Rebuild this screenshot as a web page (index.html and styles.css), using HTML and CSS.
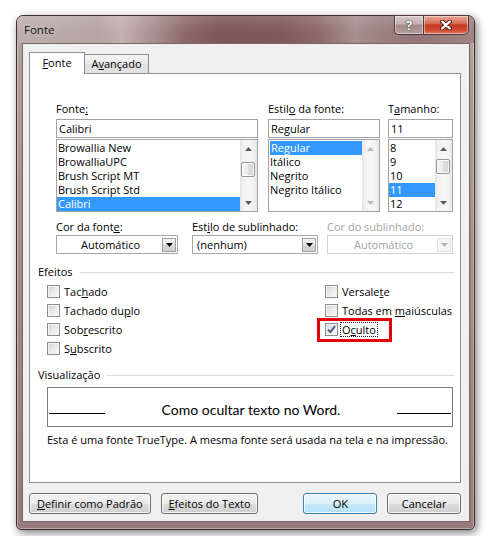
FILE: index.html
```html
<!DOCTYPE html>
<html lang="pt">
<head>
<meta charset="utf-8">
<title>Fonte</title>
<link rel="stylesheet" href="styles.css">
</head>
<body>
<div class="window">
  <div class="titlebar">
    <span class="title">Fonte</span>
    <div class="caption">
      <div class="cbtn help"><span>?</span></div>
      <div class="cbtn close">
        <svg width="12" height="10" viewBox="0 0 12 10"><path d="M2.2 1.6L9.8 8.4M9.8 1.6L2.2 8.4" stroke="#5a1d15" stroke-width="4.2" stroke-linecap="round"/><path d="M2.2 1.6L9.8 8.4M9.8 1.6L2.2 8.4" stroke="#fff" stroke-width="2.3" stroke-linecap="round"/></svg>
      </div>
    </div>
  </div>
  <div class="client">
    <div class="tabs">
      <div class="tab active"><u>F</u>onte</div>
      <div class="tab">A<u>v</u>ançado</div>
    </div>
    <div class="panel">
      <div class="fontrow">
        <div class="col c-font">
          <div class="lbl">Fonte<u>:</u></div>
          <div class="input">Calibri</div>
          <div class="list">
            <div class="items">
              <div class="item">Browallia New</div>
              <div class="item">BrowalliaUPC</div>
              <div class="item">Brush Script MT</div>
              <div class="item">Brush Script Std</div>
              <div class="item sel">Calibri</div>
            </div>
            <div class="sb">
              <div class="arr"><svg width="7" height="4" viewBox="0 0 7 4"><polygon points="0,4 3.5,0 7,4" fill="#5b5b5b"/></svg></div>
              <div class="track"><div class="thumb t1"></div></div>
              <div class="arr"><svg width="7" height="4" viewBox="0 0 7 4"><polygon points="0,0 7,0 3.5,4" fill="#5b5b5b"/></svg></div>
            </div>
          </div>
        </div>
        <div class="col c-style">
          <div class="lbl">Estil<u>o</u> da fonte:</div>
          <div class="input">Regular</div>
          <div class="list">
            <div class="items">
              <div class="item sel inset">Regular</div>
              <div class="item">Itálico</div>
              <div class="item">Negrito</div>
              <div class="item">Negrito Itálico</div>
            </div>
            <div class="sb">
              <div class="arr"><svg width="7" height="4" viewBox="0 0 7 4"><polygon points="0,4 3.5,0 7,4" fill="#b8b8b8"/></svg></div>
              <div class="track"></div>
              <div class="arr"><svg width="7" height="4" viewBox="0 0 7 4"><polygon points="0,0 7,0 3.5,4" fill="#b8b8b8"/></svg></div>
            </div>
          </div>
        </div>
        <div class="col c-size">
          <div class="lbl">T<u>a</u>manho:</div>
          <div class="input">11</div>
          <div class="list">
            <div class="items">
              <div class="item">8</div>
              <div class="item">9</div>
              <div class="item">10</div>
              <div class="item sel">11</div>
              <div class="item">12</div>
            </div>
            <div class="sb">
              <div class="arr"><svg width="7" height="4" viewBox="0 0 7 4"><polygon points="0,4 3.5,0 7,4" fill="#5b5b5b"/></svg></div>
              <div class="track"><div class="thumb t3"></div></div>
              <div class="arr"><svg width="7" height="4" viewBox="0 0 7 4"><polygon points="0,0 7,0 3.5,4" fill="#5b5b5b"/></svg></div>
            </div>
          </div>
        </div>
      </div>

      <div class="comborow">
        <div class="ccol cc1">
          <div class="lbl">Cor da font<u>e</u>:</div>
          <div class="combo">
            <span class="val center">Automático</span>
            <span class="dd"><svg width="7" height="4" viewBox="0 0 7 4"><polygon points="0,0 7,0 3.5,4" fill="#000"/></svg></span>
          </div>
        </div>
        <div class="ccol cc2">
          <div class="lbl">Est<u>i</u>lo de sublinhado:</div>
          <div class="combo">
            <span class="val">(nenhum)</span>
            <span class="dd"><svg width="7" height="4" viewBox="0 0 7 4"><polygon points="0,0 7,0 3.5,4" fill="#000"/></svg></span>
          </div>
        </div>
        <div class="ccol cc3 disabled">
          <div class="lbl">Cor do sublinhado:</div>
          <div class="combo">
            <span class="val center">Automático</span>
            <span class="dd"><svg width="7" height="4" viewBox="0 0 7 4"><polygon points="0,0 7,0 3.5,4" fill="#b5b5b5"/></svg></span>
          </div>
        </div>
      </div>

      <div class="group">
        <span>Efeitos</span><span class="rule"></span>
      </div>
      <div class="effects">
        <div class="ecol left">
          <div class="cb"><span class="box"></span><span>Tac<u>h</u>ado</span></div>
          <div class="cb"><span class="box"></span><span>Tachado du<u>p</u>lo</span></div>
          <div class="cb"><span class="box"></span><span>Sob<u>r</u>escrito</span></div>
          <div class="cb"><span class="box"></span><span>S<u>u</u>bscrito</span></div>
        </div>
        <div class="ecol right">
          <div class="cb"><span class="box"></span><span>Versale<u>t</u>e</span></div>
          <div class="cb"><span class="box"></span><span>Todas em <u>m</u>aiúsculas</span></div>
          <div class="cb oculto">
            <span class="box"><svg width="11" height="11" viewBox="0 0 11 11"><path d="M2 5.6L4.4 8.2L9 2.2" fill="none" stroke="#4b5c8c" stroke-width="1.9" stroke-linejoin="round"/></svg></span>
            <span class="focus">O<u>c</u>ulto</span>
            <span class="redframe"></span>
          </div>
        </div>
      </div>

      <div class="group vis">
        <span>Visualização</span><span class="rule"></span>
      </div>
      <div class="preview">
        <span class="pline l"></span>
        <span class="ptext">Como ocultar texto no Word.</span>
        <span class="pline r"></span>
      </div>
      <div class="note">Esta é uma fonte TrueType. A mesma fonte será usada na tela e na impressão.</div>
    </div>

    <div class="buttons">
      <div class="btn b1"><span><u>D</u>efinir como Padrão</span></div>
      <div class="btn b2"><span><u>E</u>feitos do Texto</span></div>
      <div class="btn ok">OK</div>
      <div class="btn cancel">Cancelar</div>
    </div>
  </div>
</div>
</body>
</html>
```

FILE: styles.css
```css
* { box-sizing: border-box; }
html, body { margin: 0; padding: 0; background: #fff; }
body {
  width: 489px;
  height: 536px;
  overflow: hidden;
  font-family: "Segoe UI", "Open Sans", "DejaVu Sans", sans-serif;
  font-size: 11px;
  color: #000;
}
u { text-decoration: underline; text-underline-offset: 1px; }

.window {
  margin: 15px 0 0 16px;
  width: 459px;
  height: 515px;
  border: 1px solid #3e2f2f;
  border-radius: 7px 7px 5px 5px;
  padding: 0 4px 7px 5px;
  display: flex;
  flex-direction: column;
  background: linear-gradient(180deg, #b4a2a2 0%, #a58b8b 45%, #987a7a 100%);
  box-shadow: 2px 3px 9px rgba(0,0,0,0.5), inset 0 0 0 1px rgba(255,255,255,0.35);
}

.titlebar {
  height: 27px;
  margin: 0 -4px 0 -5px;
  padding: 0 5px 0 7px;
  border-radius: 6px 6px 0 0;
  display: flex;
  justify-content: space-between;
  align-items: flex-start;
  background:
    linear-gradient(180deg, rgba(255,255,255,0.14) 0%, rgba(255,255,255,0) 60%),
    linear-gradient(90deg, #bcaeae 0%, #b6a4a4 18%, #c3b0b0 23%, #a88f8f 30%, #8c6868 37%, #7c5757 44%, #7e5959 58%, #8d6a6a 66%, #a88e8e 74%, #9d8181 79%, #947474 88%, #a08484 100%);
}
.title {
  line-height: 27px;
  font-size: 11.5px;
  color: #111;
  text-shadow: 0 0 6px rgba(255,255,255,0.6);
}
.caption {
  display: flex;
  margin-top: -1px;
}
.cbtn {
  height: 20px;
  border: 1px solid #4d3a3a;
  display: flex;
  align-items: center;
  justify-content: center;
  box-shadow: inset 0 0 0 1px rgba(255,255,255,0.45);
}
.help {
  width: 29px;
  border-right: none;
  border-radius: 0 0 0 5px;
  background: linear-gradient(180deg, #d5c9c9 0%, #c2b0b0 45%, #a68b8b 50%, #b59e9e 100%);
  color: #fff;
  font-weight: bold;
  font-size: 13px;
  text-shadow: 0 0 2px #3b2a2a, 0 0 1px #3b2a2a;
}
.help span { line-height: 16px; }
.close {
  width: 46px;
  border-radius: 0 0 5px 0;
  background: linear-gradient(180deg, #e9a89a 0%, #d8705e 40%, #c43b22 50%, #cf4d33 80%, #e07a60 100%);
}

.client {
  flex: 1;
  background: #f0f0f0;
  border: 1px solid #7a6464;
  padding: 8px 8px 0 6px;
  display: flex;
  flex-direction: column;
}

.tabs {
  display: flex;
  align-items: flex-end;
  height: 22px;
}
.tab {
  height: 20px;
  width: 65px;
  margin-left: -1px;
  border: 1px solid #8e8f8f;
  background: linear-gradient(180deg, #f3f3f3 0%, #ebebeb 50%, #dedede 51%, #e3e3e3 100%);
  display: flex;
  align-items: center;
  justify-content: center;
  padding-bottom: 1px;
}
.tab.active {
  height: 22px;
  width: 56px;
  margin-left: 0;
  background: #fff;
  border-bottom: none;
  position: relative;
  z-index: 1;
  padding-bottom: 3px;
}

.panel {
  margin-top: -1px;
  height: 410px;
  border: 1px solid #8e8f8f;
  background: #fff;
  display: flex;
  flex-direction: column;
}

.lbl { line-height: 15px; height: 15px; white-space: nowrap; }

.fontrow {
  margin-top: 27px;
  padding-left: 26px;
  display: flex;
}
.col { display: flex; flex-direction: column; }
.col .lbl { margin-bottom: 3px; }
.c-font { width: 202px; }
.c-style { width: 112px; margin-left: 10px; }
.c-size { width: 65px; margin-left: 8px; }

.input {
  height: 19px;
  border: 1px solid #a3a3a3;
  line-height: 17px;
  padding-left: 2px;
}
.list {
  margin-top: 1px;
  height: 73px;
  border: 1px solid #a3a3a3;
  display: flex;
}
.items { flex: 1; padding-top: 1px; min-width: 0; }
.item { line-height: 14px; height: 14px; padding-left: 1px; white-space: nowrap; }
.item.sel { background: #3399ff; color: #fff; }
.item.inset { margin-left: 1px; }

.sb {
  width: 17px;
  display: flex;
  flex-direction: column;
  background: linear-gradient(90deg, #e4e4e4 0, #f1f1f1 3px, #f7f7f7 50%, #f1f1f1 calc(100% - 3px), #e6e6e6 100%);
}
.arr { height: 17px; display: flex; align-items: center; justify-content: center; }
.track { flex: 1; }
.thumb {
  width: 14px;
  height: 15px;
  margin-left: 1px;
  border: 1px solid #979797;
  border-radius: 2px;
  background: linear-gradient(90deg, #f4f4f4 0%, #ececec 50%, #dcdcdc 51%, #d6d6d6 100%);
  box-shadow: inset 0 0 0 1px rgba(255,255,255,0.8);
}
.t1 { margin-top: 5px; }
.t3 { margin-top: 2px; }

.comborow {
  margin-top: 7px;
  padding-left: 26px;
  display: flex;
}
.ccol { display: flex; flex-direction: column; }
.ccol .lbl { margin-bottom: 1px; }
.cc1 { width: 122px; }
.cc2 { width: 126px; margin-left: 14px; }
.cc3 { width: 126px; margin-left: 9px; }
.combo {
  height: 19px;
  border: 1px solid #a8a8a8;
  background: #fff;
  display: flex;
  padding: 2px 1px 1px 2px;
}
.val { flex: 1; line-height: 14px; padding-left: 2px; }
.val.center { text-align: center; padding-left: 0; }
.dd {
  width: 14px;
  border: 1px solid #a0a0a0;
  background: linear-gradient(180deg, #f4f4f4 0%, #e8e8e8 50%, #d8d8d8 51%, #d0d0d0 100%);
  display: flex;
  align-items: center;
  justify-content: center;
}
.disabled .lbl, .disabled .val { color: #a3a3a3; }
.disabled .combo { border-color: #d2d2d2; }
.disabled .dd { border-color: #e2e2e2; background: #f6f6f6; }

.group {
  margin-top: 10px;
  height: 15px;
  line-height: 15px;
  padding-left: 8px;
  padding-right: 5px;
  display: flex;
  align-items: center;
}
.rule { flex: 1; height: 1px; background: #d8dde2; margin-left: 7px; margin-top: 1px; }
.group.vis { margin-top: 9px; }

.effects { margin-top: 3px; display: flex; }
.ecol.left { width: 295px; padding-left: 17px; }
.ecol.right { flex: 1; }
.cb { height: 19px; display: flex; align-items: center; gap: 4px; position: relative; white-space: nowrap; }
.box {
  width: 13px;
  height: 13px;
  border: 1px solid #8e8f8f;
  background: linear-gradient(135deg, #d3d3d3 0%, #ececec 55%, #fafafa 100%);
  box-shadow: inset 0 0 0 1px #f4f4f4;
  display: flex;
  align-items: center;
  justify-content: center;
  flex: none;
}
.focus {
  margin-left: -2px;
  padding: 0 1px;
  line-height: 13px;
  border: 1px dotted #222;
}
.redframe {
  position: absolute;
  left: -8px;
  top: -2px;
  width: 75px;
  height: 24px;
  border: 3px solid #e4000b;
}

.preview {
  margin: 5px 0 0 17px;
  width: 406px;
  height: 40px;
  border: 1px solid #7d7d7d;
  display: flex;
  align-items: center;
  padding-top: 6px;
}
.pline { width: 56px; height: 1px; background: #000; margin-top: 6px; flex: none; }
.pline.l { margin-left: 1px; }
.pline.r { width: 54px; margin-right: 1px; }
.ptext {
  flex: 1;
  text-align: center;
  font-family: "Lato", "Open Sans", sans-serif;
  font-size: 14px;
  line-height: 18px;
}
.note {
  margin-top: 5px;
  padding-left: 17px;
  line-height: 15px;
  white-space: nowrap;
}

.buttons {
  margin-top: 10px;
  display: flex;
}
.btn {
  height: 21px;
  border: 1px solid #707070;
  border-radius: 3px;
  background: linear-gradient(180deg, #f2f2f2 0%, #ebebeb 50%, #dddddd 51%, #cfcfcf 100%);
  box-shadow: inset 0 0 0 1px rgba(255,255,255,0.75);
  display: flex;
  align-items: center;
  justify-content: center;
  line-height: 15px;
  white-space: nowrap;
}
.b1 { width: 122px; }
.b2 { width: 98px; margin-left: 10px; }
.ok {
  width: 74px;
  margin-left: 45px;
  border-color: #3c7fb1;
  background: linear-gradient(180deg, #ebf6fd 0%, #dcf1fc 50%, #c7e8fa 51%, #b4dff6 100%);
}
.cancel { width: 74px; margin-left: 10px; }
```
